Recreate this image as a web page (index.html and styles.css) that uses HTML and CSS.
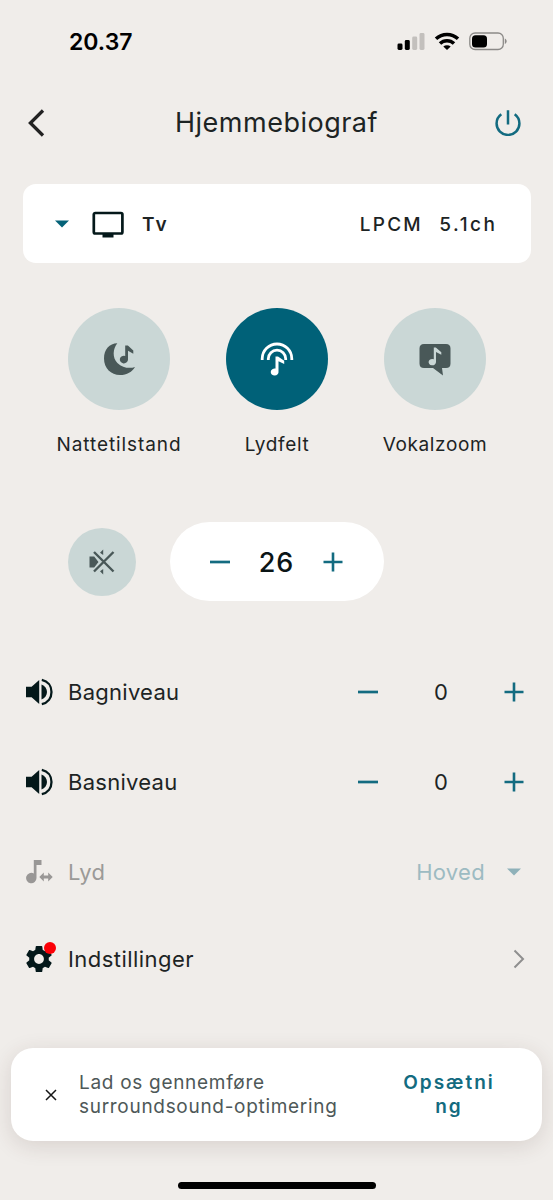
FILE: index.html
```html
<!DOCTYPE html>
<html lang="da">
<head>
<meta charset="utf-8">
<title>Hjemmebiograf</title>
<link rel="stylesheet" href="styles.css">
</head>
<body>
<svg class="defs" aria-hidden="true">
  <symbol id="speaker" viewBox="0 0 28 28">
    <path d="M0 8.700H5.600L13.200 2V26L5.600 19.300H0z" fill="currentColor"/>
    <path d="M15.500 6.500C19 8 21 10.800 21 14S19 20 15.500 21.500z" fill="currentColor"/>
    <path d="M15.800 1.900C22 3.200 25.500 8 25.500 14S22 24.800 15.800 26.100" fill="none" stroke="currentColor" stroke-width="2.300"/>
  </symbol>
  <symbol id="minus" viewBox="0 0 22 22"><path d="M1 11H21" stroke="currentColor" stroke-width="2.700"/></symbol>
  <symbol id="plus" viewBox="0 0 22 22"><path d="M1.500 11H20.500M11 1.500V20.500" stroke="currentColor" stroke-width="2.600"/></symbol>
  <symbol id="caret" viewBox="0 0 14 8"><path d="M0 .5H14L7 7.500z" fill="currentColor"/></symbol>
</svg>
<div class="screen">
  <div class="status">
    <span class="time">20.37</span>
    <svg class="signals" width="112" height="20" viewBox="0 0 112 20">
      <rect x="0.500" y="11.500" width="5" height="6.500" rx="1.400"/>
      <rect x="7.800" y="8" width="5" height="10" rx="1.400"/>
      <g fill="#c3c0bd"><rect x="15.200" y="4.500" width="5" height="13.500" rx="1.400"/><rect x="22.500" y="1" width="5" height="17" rx="1.400"/></g>
      <g fill="none" stroke="#000" stroke-width="3.500"><path d="M39 6.800A16 16 0 0 1 61 6.800"/><path d="M43 11.500A10 10 0 0 1 57 11.500"/></g>
      <path d="M50 18L46.300 14.600A5.500 5.500 0 0 1 53.700 14.600z"/>
      <rect x="72.800" y="1" width="33.500" height="16.500" rx="5.300" fill="none" stroke="#8c8a88" stroke-width="1.300"/>
      <rect x="75" y="3.200" width="15" height="12.200" rx="3.500"/>
      <path d="M107.800 6.500C110.300 7.500 110.300 11 107.800 12z" fill="#8c8a88"/>
    </svg>
  </div>
  <header class="header">
    <svg width="18" height="28" viewBox="0 0 18 28"><path d="M16 1.500L3.400 14L16 26.500" fill="none" stroke="#222" stroke-width="3.300"/></svg>
    <h1 class="title">Hjemmebiograf</h1>
    <svg class="power" width="26" height="26" viewBox="0 0 28 28"><path d="M6.800 4.500C3.700 6.700 1.700 10.200 1.700 14.500A12.300 12.300 0 0 0 26.300 14.500C26.300 10.200 24.300 6.700 21.200 4.500M14 .3V15.600" fill="none" stroke="currentColor" stroke-width="2.700"/></svg>
  </header>
  <section class="source">
    <svg class="source-caret" width="14" height="8"><use href="#caret"/></svg>
    <svg class="tv" width="32" height="27" viewBox="0 0 32 27"><rect x="1.800" y="2" width="28.600" height="20.500" rx="1.500" fill="none" stroke="#04181a" stroke-width="2.700"/><path d="M10.500 22H21.500V26.500H10.500z" fill="#04181a"/></svg>
    <span class="source-name">Tv</span>
    <span class="codec">LPCM</span>
    <span class="channels">5.1ch</span>
  </section>
  <section class="modes">
    <div class="mode">
      <div class="disc"><svg width="34" height="34" viewBox="0 0 34 34" fill="currentColor"><path d="M15.300 1.200C7.400 1.500 2 7.200 2 16.500C2 26.300 9 33 18 33C25 33 30.200 29.600 33 24.900C28 26.800 20.500 26 15.400 20.900C10.200 15.500 10.800 6.800 15.300 1.200z"/><path d="M23.200 3.500H25.900L31.300 8.400V11.700L26 8.700V17.500A4.100 3.800 0 1 1 23.200 14z"/></svg></div>
      <span class="mode-label night">Nattetilstand</span>
    </div>
    <div class="mode">
      <div class="disc active"><svg width="34" height="34" viewBox="0 0 34 34" fill="currentColor"><g fill="none" stroke="currentColor" stroke-width="2.800"><path d="M2.200 18V16.800A14.700 14.700 0 0 1 31.800 16.800V18"/><path d="M8.300 18V16.800A8.700 8.700 0 0 1 25.700 16.800V18"/></g><path d="M15.500 14.500H18L24.200 18.700V22L18.500 19.200V29.500A3.900 3.500 0 1 1 15.500 26.600z"/></svg></div>
      <span class="mode-label field">Lydfelt</span>
    </div>
    <div class="mode">
      <div class="disc"><svg width="34" height="34" viewBox="0 0 34 34"><path d="M6 2H28Q32.500 2 32.500 6.500V21.500Q32.500 26 28 26H24L25 33.500L15 26H6Q1.500 26 1.500 21.500V6.500Q1.500 2 6 2z" fill="currentColor"/><path d="M15.800 5.500H17.800L23.300 10.300V12.800L18 10V20A3.700 3.200 0 1 1 15.800 17.200z" fill="#cad7d6"/></svg></div>
      <span class="mode-label vocal">Vokalzoom</span>
    </div>
  </section>
  <section class="volume">
    <div class="mute"><svg width="28" height="26" viewBox="0 0 28 26"><path d="M1.500 7.500H6.200L10.500 13L6.200 18.500H1.500zM12 3.800L15.200 .5V6zM12 22.200L15.200 25.500V20z" fill="currentColor"/><path d="M6 3L25.500 22.500M25.500 3L6 22.500" stroke="currentColor" stroke-width="2.400"/></svg></div>
    <div class="pill">
      <svg width="22" height="22"><use href="#minus"/></svg>
      <span class="volume-value">26</span>
      <svg width="22" height="22"><use href="#plus"/></svg>
    </div>
  </section>
  <section class="rows">
    <div class="row">
      <svg class="row-icon" width="28" height="28"><use href="#speaker"/></svg>
      <span class="row-label">Bagniveau</span>
      <span class="stepper"><svg width="22" height="22"><use href="#minus"/></svg><span class="level">0</span><svg width="22" height="22"><use href="#plus"/></svg></span>
    </div>
    <div class="row">
      <svg class="row-icon" width="28" height="28"><use href="#speaker"/></svg>
      <span class="row-label">Basniveau</span>
      <span class="stepper"><svg width="22" height="22"><use href="#minus"/></svg><span class="level">0</span><svg width="22" height="22"><use href="#plus"/></svg></span>
    </div>
    <div class="row disabled">
      <svg class="row-icon" width="28" height="28" viewBox="0 0 28 28" fill="currentColor"><path d="M7.800 2H15.500V7H10.500V20A5.200 5.200 0 1 1 7.800 15.500z"/><path d="M13.300 19L17.800 14.600V17.600H22.200V14.600L26.700 19L22.200 23.400V20.400H17.800V23.400z"/></svg>
      <span class="row-label">Lyd</span>
      <span class="choice">Hoved</span>
      <svg class="choice-caret" width="14" height="8"><use href="#caret"/></svg>
    </div>
    <div class="row settings">
      <span class="row-icon gear">
        <svg width="28" height="28" viewBox="1.700 1.700 20.600 20.600"><path fill="currentColor" d="M19.140 12.940c.04-.3.060-.61.060-.94 0-.32-.02-.64-.07-.94l2.030-1.580c.18-.14.230-.41.120-.61l-1.920-3.320c-.12-.22-.37-.29-.59-.22l-2.390.96c-.5-.38-1.030-.7-1.620-.94l-.36-2.540c-.04-.24-.24-.41-.48-.41h-3.840c-.24 0-.43.170-.47.410l-.36 2.540c-.59.240-1.130.570-1.620.940l-2.390-.96c-.22-.08-.47 0-.59.220L2.740 8.870c-.12.210-.08.470.12.610l2.030 1.580c-.05.300-.09.630-.09.940s.02.640.07.940l-2.030 1.580c-.18.140-.23.410-.12.610l1.920 3.320c.12.220.37.290.59.220l2.390-.96c.5.380 1.030.7 1.620.940l.36 2.540c.05.240.24.410.48.410h3.840c.24 0 .44-.17.470-.41l.36-2.540c.59-.24 1.130-.56 1.620-.94l2.390.960c.22.080.47 0 .59-.22l1.920-3.320c.12-.22.070-.47-.12-.61l-2.010-1.580zM12 15.600c-1.980 0-3.600-1.620-3.600-3.600s1.620-3.600 3.600-3.600 3.600 1.620 3.600 3.600-1.620 3.600-3.600 3.600z"/></svg>
        <i class="badge"></i>
      </span>
      <span class="row-label">Indstillinger</span>
      <svg class="chevron" width="12" height="20" viewBox="0 0 12 20"><path d="M1.500 1.500L10 10L1.500 18.500" fill="none" stroke="#8f8f8f" stroke-width="2"/></svg>
    </div>
  </section>
  <section class="banner">
    <svg class="close" width="12" height="12" viewBox="0 0 12 12"><path d="M1 1L11 11M11 1L1 11" stroke="#151515" stroke-width="1.500"/></svg>
    <p class="message">Lad os gennemføre<br>surroundsound-optimering</p>
    <div class="setup">Opsætni<br>ng</div>
  </section>
  <div class="home"></div>
</div>
</body>
</html>
```
FILE: styles.css
```css
* { box-sizing: border-box; }
body { margin: 0; background: #f0edea; color: #1d2424; font-family: Inter, "Liberation Sans", sans-serif; }
svg { display: block; flex: none; }
.defs { width: 0; height: 0; position: absolute; }
.screen { width: 553px; height: 1200px; display: flex; flex-direction: column; overflow: hidden; white-space: nowrap; }
.status { height: 82px; display: flex; align-items: center; justify-content: space-between; padding: 2px 44px 0 69px; color: #000; }
.time { font-size: 23px; font-weight: 600; }
.header { height: 81px; display: flex; align-items: center; padding: 0 32px 0 27px; }
.title { margin: 0 auto 0 130px; font-size: 27px; font-weight: 400; letter-spacing: .5px; }
.power { color: #136b80; }
.source { margin: 21px 22px 0 23px; height: 79px; border-radius: 13px; background: #fff; display: flex; align-items: center; padding: 1px 33.500px 0 32px; font-size: 19px; font-weight: 450; letter-spacing: 2.200px; }
.source-caret { color: #056278; }
.tv { margin: 0 18px 0 23px; }
.source-name { font-weight: 600; }
.codec { margin-left: auto; }
.channels { margin-left: 16.500px; letter-spacing: 2.500px; }
.modes { margin: 45px 39px 0 40px; display: grid; grid-template-columns: repeat(3, 158px); }
.mode { display: flex; flex-direction: column; align-items: center; }
.disc { width: 102px; height: 102px; border-radius: 50%; background: #cad7d6; color: #495858; display: grid; place-items: center; }
.active { background: #006178; color: #fff; }
.mode-label { margin-top: 23px; line-height: 24px; font-size: 19px; letter-spacing: .65px; }
.night { letter-spacing: .92px; }
.volume { margin: 65px 0 0 68px; display: flex; align-items: center; gap: 34px; }
.mute { width: 68px; height: 68px; border-radius: 50%; display: grid; place-items: center; background: #cad7d6; color: #495858; }
.pill { width: 214px; height: 79px; border-radius: 40px; background: #fff; display: flex; align-items: center; justify-content: space-between; padding: 0 40px 0 39px; color: #136b80; }
.volume-value { font-size: 27px; font-weight: 500; color: #0b1516; letter-spacing: 1px; padding-top: 1px; }
.rows { margin-top: 46px; padding: 0 28px 0 25.500px; }
.row { height: 90px; display: flex; align-items: center; font-size: 22px; letter-spacing: .27px; }
.row-icon { width: 28px; margin-right: 14.500px; color: #04181a; }
.stepper { margin-left: auto; display: flex; align-items: center; color: #136b80; width: 168px; justify-content: space-between; }
.level { color: #1d2424; }
.disabled { color: #9b9a98; }
.disabled .row-icon { color: #999796; }
.choice { margin-left: auto; color: #9dbbc2; letter-spacing: .3px; }
.choice-caret { margin: 0 4px 0 22px; color: #8fb1b9; }
.settings { height: 84px; }
.settings .row-label { letter-spacing: .45px; }
.gear { position: relative; left: -.5px; }
.badge { position: absolute; width: 12px; height: 12px; border-radius: 50%; background: #fb0007; right: -3px; top: -3px; }
.chevron { margin-left: auto; }
.banner { margin: 47px 11px 0 11px; height: 93px; border-radius: 22px; background: #fff; box-shadow: 0 5px 22px rgba(70, 45, 35, .14); display: flex; align-items: center; padding: 0 43px 0 34px; font-size: 19px; line-height: 24px; }
.message { margin: 0 0 0 22px; padding-top: 1px; color: #4e5858; letter-spacing: .7px; }
.setup { width: 100px; margin-left: auto; padding-top: 1px; color: #136b80; text-align: center; font-weight: 600; letter-spacing: 2px; }
.home { width: 198px; height: 7px; border-radius: 4px; background: #000; margin: 41px auto 0 178px; }
```
